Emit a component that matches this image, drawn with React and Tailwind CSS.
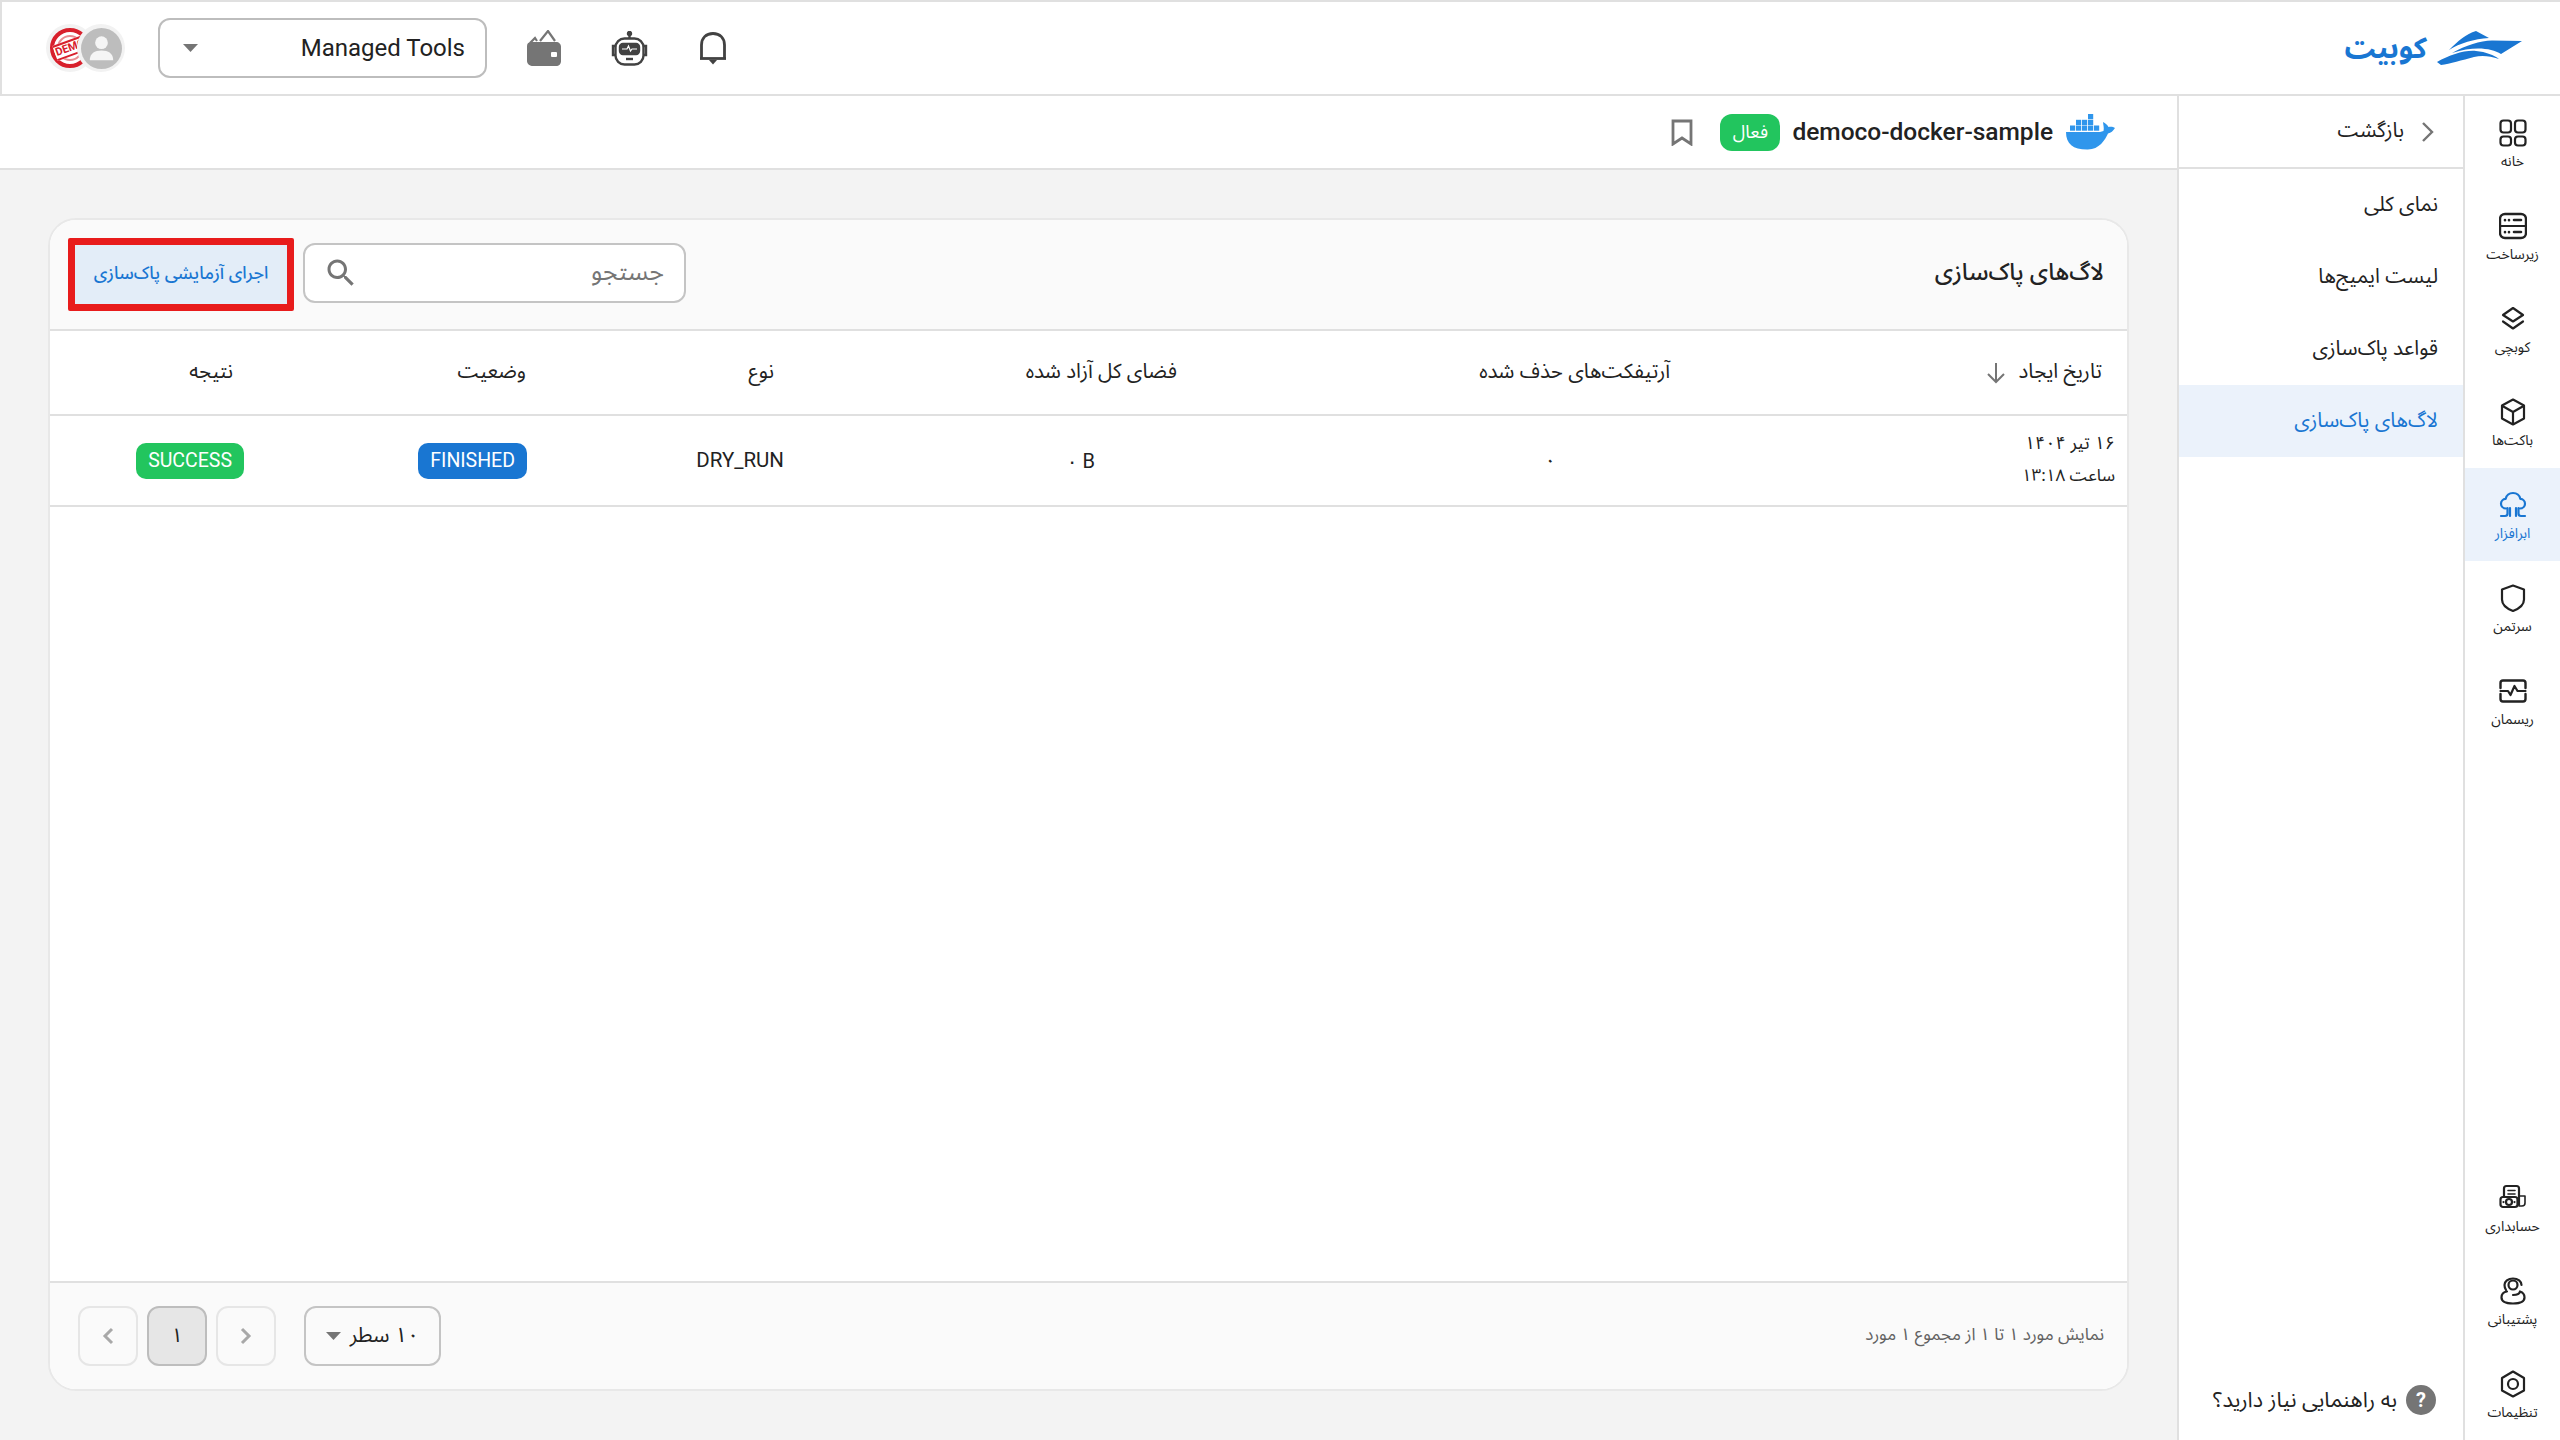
import React from 'react';

const fa = { fontFamily: '"Noto Sans Arabic","Vazirmatn","Noto Sans","DejaVu Sans",sans-serif' };
const ro = { fontFamily: 'Roboto,"DejaVu Sans",sans-serif' };

const S = ({ children, c = 'currentColor', w = 2.2, size = 28, className = '' }) => (
  <svg width={size} height={size} viewBox="0 0 28 28" fill="none" stroke={c} strokeWidth={w} strokeLinecap="round" strokeLinejoin="round" className={className}>{children}</svg>
);

const icons = {
  home: <><rect x="1.500" y="1.500" width="10.500" height="12" rx="3" /><rect x="16" y="1.500" width="10.500" height="12" rx="3" /><rect x="1.500" y="17.500" width="10.500" height="9" rx="3" /><rect x="16" y="17.500" width="10.500" height="9" rx="3" /></>,
  infra: <><rect x="1" y="2" width="26" height="24" rx="5" strokeWidth="2.400" /><path d="M1 14h26" /><path d="M6 8v.2M10 8v.2M6 20v.2M10 20v.2M15 8h7M15 20h7" strokeWidth="2.600" /></>,
  layers: <><path d="M14 3 24 10 14 16.500 4 10z" /><path d="M4 16.500 14 23.500 24 16.500" /></>,
  box: <><path d="M14 1.500 25 7.500v13L14 26.500 3 20.500v-13z" /><path d="M3.500 8 14 14l10.500-6M14 14v12" /></>,
  cloud: <><path d="M7 17.500c-3 0-5-2.200-5-4.800 0-2.600 2-4.600 4.600-4.800C7.500 4.300 10.400 2 14 2s6.500 2.300 7.400 5.900c2.600.200 4.600 2.200 4.600 4.800s-2 4.800-5 4.800" /><path d="M2 25h4c1.500 0 2.500-1 2.500-2.500V17M26 25h-4c-1.500 0-2.500-1-2.500-2.500V17M11 25v-8M17 25v-8" /></>,
  shield: <path d="M14 1.500 25 5.500v10c0 5-4.500 9-11 11.500-6.500-2.500-11-6.500-11-11.500v-10z" />,
  wave: <><path d="M1.500 11V6c0-1.500.8-2.500 2.500-2.500h20c1.700 0 2.500 1 2.500 2.500v5M1.500 17v5c0 1.500.8 2.500 2.500 2.500h20c1.700 0 2.500-1 2.500-2.500v-5" strokeWidth="2.400" /><path d="M1.500 14H9l2.500 4 4-9 3 5h8" /></>,
  account: <><path d="M5 13V4.500C5 2.800 6 2 7.500 2h10C19 2 20 3 20 4.500V21" /><path d="M20 12h6v7c0 2-1 3-3 3h-3M9 6.500h7M9 10h7" strokeWidth="1.600" /><rect x="1.500" y="13" width="17" height="10" rx="2.500" /><circle cx="10" cy="18" r="3" /><path d="M4.500 18v.1M15.500 18v.1" /></>,
  support: <><circle cx="14" cy="8" r="4.500" /><path d="M7 13c-1-1.500-1.500-3-1.500-5C5.500 4.500 9 1.500 14 1.500S22.500 4.500 22.500 8" /><path d="M8 14.500C4.500 15 2.500 17.500 2.500 20.500c0 3.500 3.500 6 11.500 6s11.500-2.500 11.500-6c0-3-1.500-5-4.500-6-.500 2.500-3 3.500-7 3.500" /></>,
  gear: <><path d="M14 1.500 25 8v12.500L14 26.500 3 20.500V8z" strokeWidth="2.200" /><circle cx="14" cy="14" r="5" strokeWidth="2.200" /></>,
};

const RailItem = ({ icon, label, active }) => (
  <div className={`h-[93px] flex flex-col items-center pt-[23px] ${active ? 'bg-[#ebf2fb] text-[#1976d2]' : 'text-[#222]'}`}>
    <S>{icons[icon]}</S>
    <span className="text-[14px] leading-[20px] mt-[5px] whitespace-nowrap" style={fa}>{label}</span>
  </div>
);

const NavItem = ({ label, active }) => (
  <div className={`h-[72px] flex items-center pr-[25px] text-[20.500px] ${active ? 'bg-[#ebf2fb] text-[#1976d2]' : 'text-[#222]'}`} style={fa}>{label}</div>
);

const Caret = ({ c = '#757575' }) => (
  <svg width="15" height="8" viewBox="0 0 15 8"><path d="M0 0h15L7.500 8z" fill={c} /></svg>
);

const Logo = () => (
  <svg width="86" height="34" viewBox="0 0 86 34" fill="#1976d2">
    <path d="M13 19C22 10 30 3 40 0l13 7C38 8 24 12 13 19z" />
    <path d="M16 22C30 14 44 10 56 9.500L86 10 65 23C55 17 38 15 16 22z" />
    <path d="M1 31C14 24 28 19 40 20c10 1 18 4 23 8-9-3-17-4-25-2C26 29 14 33 5 34z" />
  </svg>
);

const Docker = () => (
  <svg width="51" height="36" viewBox="0 0 51 36" fill="#2f96ec">
    <path d="M1 18h34l3.500-1c.8-3-.3-6-.5-9 2.500 1 4.500 3 5.500 5 2-.5 4.500-.5 6.500 1-2 3-4 5-7 5.500C40 26 34 36 22 35.500 8 35.500 1 30 1 18z" />
    <rect x="23" y="0" width="5.200" height="5.200" />
    <rect x="11" y="5.800" width="5.200" height="5.200" />
    <rect x="17" y="5.800" width="5.200" height="5.200" />
    <rect x="23" y="5.800" width="5.200" height="5.200" />
    <rect x="5" y="11.500" width="5.200" height="5.200" />
    <rect x="11" y="11.500" width="5.200" height="5.200" />
    <rect x="17" y="11.500" width="5.200" height="5.200" />
    <rect x="23" y="11.500" width="5.200" height="5.200" />
    <rect x="29" y="11.500" width="5.200" height="5.200" />
  </svg>
);

const Wallet = () => (
  <svg width="34" height="36" viewBox="0 0 34 36">
    <path d="M3 13 8 8l2 3M13 11 21 1l7 10" fill="none" stroke="#757575" strokeWidth="2.200" />
    <path d="M0 16c0-3 2-4 4-4h25c3 0 5 2 5 5v14c0 3-2 5-5 5H6c-3 0-6-2-6-5z" fill="#757575" />
    <rect x="24" y="22" width="6" height="5" rx="1" fill="#fff" />
  </svg>
);

const Robot = () => (
  <svg width="37" height="35" viewBox="0 0 37 35" fill="none" stroke="#424242" strokeWidth="2.400">
    <path d="M18.500 7V3" /><circle cx="18.500" cy="2.500" r="1.500" fill="#424242" />
    <rect x="4.500" y="7.500" width="28" height="26" rx="9" />
    <path d="M4 15H2v9h2M33 15h2v9h-2" />
    <rect x="9" y="13" width="19" height="10" rx="3" fill="#424242" />
    <path d="M11 18h5l1.500-3 2 5 1.500-2h5" stroke="#fff" strokeWidth="1.200" />
    <path d="M15 28h7" />
  </svg>
);

const Bell = () => (
  <svg width="28" height="33" viewBox="0 0 28 33" fill="none" stroke="#424242" strokeWidth="2.800">
    <path d="M2.500 26V13C2.500 6 7 1.500 14 1.500S25.500 6 25.500 13v13" />
    <path d="M1 26.500h26" />
    <path d="M10 28h8L14 32.500z" fill="#424242" stroke="none" />
  </svg>
);

const Avatars = () => (
  <div className="relative w-[80px] h-[48px]" dir="ltr">
    <div className="absolute left-0 top-0 w-[48px] h-[48px] rounded-full bg-[#f2f2f2] flex items-center justify-center overflow-hidden">
      <div className="relative w-[40px] h-[40px] rounded-full border-[4px] border-[#d8202c] bg-white flex items-center justify-center">
        <div className="absolute inset-[3px] rounded-full border-2 border-[#e98d92]" />
        <span className="relative bg-white border-y-2 border-[#d8202c] px-[1px] text-[#d8202c] text-[11px] leading-[12px] font-bold -rotate-[20deg]" style={ro}>DEMO</span>
      </div>
    </div>
    <div className="absolute left-[31px] top-0 w-[48px] h-[48px] rounded-full bg-[#f2f2f2] flex items-center justify-center">
      <svg width="41" height="41" viewBox="0 0 42 42"><circle cx="21" cy="21" r="21" fill="#bdbdbd" /><circle cx="21" cy="15" r="6.500" fill="#f5f5f5" /><path d="M9 33c0-7 5-10 12-10s12 3 12 10z" fill="#f5f5f5" /></svg>
    </div>
  </div>
);

const Th = ({ children }) => (
  <div className="flex items-center pr-[25px] text-[#222] text-[20.500px] whitespace-nowrap" style={fa}>{children}</div>
);

const Badge = ({ children, bg }) => (
  <span className={`h-[36px] px-[12px] rounded-[10px] flex items-center text-white text-[19.500px] ${bg}`} style={ro}>{children}</span>
);

export default function App() {
  return (
    <div dir="rtl" className="w-[2560px] h-[1440px] bg-[#f3f3f3] flex flex-col overflow-hidden" style={fa}>
      <header className="h-[96px] shrink-0 bg-white border-t-2 border-b-2 border-l-2 border-[#e0e0e0] flex items-center justify-between pr-[38px] pl-[44px]">
        <div className="flex items-center gap-[9px]" dir="rtl">
          <Logo />
          <span className="text-[#1976d2] text-[29px] font-bold leading-none" style={fa}>کوبیت</span>
        </div>
        <div className="flex items-center" dir="ltr">
          <Avatars />
          <div className="ml-[32px] w-[329px] h-[60px] rounded-[12px] border-2 border-[#bdbdbd] flex items-center justify-between pl-[23px] pr-[20px]">
            <Caret />
            <span className="text-[24px] text-[#222]" style={ro}>Managed Tools</span>
          </div>
          <div className="ml-[40px]"><Wallet /></div>
          <div className="ml-[50px]"><Robot /></div>
          <div className="ml-[51px]"><Bell /></div>
        </div>
      </header>

      <div className="flex-1 flex min-h-0">
        <aside className="w-[97px] shrink-0 bg-white border-l-2 border-[#e0e0e0] flex flex-col justify-between">
          <div>
            <RailItem icon="home" label="خانه" />
            <RailItem icon="infra" label="زیرساخت" />
            <RailItem icon="layers" label="کوبچی" />
            <RailItem icon="box" label="باکت‌ها" />
            <RailItem icon="cloud" label="ابرافزار" active />
            <RailItem icon="shield" label="سرتمن" />
            <RailItem icon="wave" label="ریسمان" />
          </div>
          <div>
            <RailItem icon="account" label="حسابداری" />
            <RailItem icon="support" label="پشتیبانی" />
            <RailItem icon="gear" label="تنظیمات" />
          </div>
        </aside>

        <nav className="w-[286px] shrink-0 bg-white border-l-2 border-[#e0e0e0] flex flex-col">
          <div className="h-[73px] shrink-0 border-b-2 border-[#e0e0e0] flex items-center pr-[28px] gap-[17px] text-[#222] text-[20.500px]">
            <svg width="14" height="22" viewBox="0 0 14 22" fill="none" stroke="#757575" strokeWidth="2.400"><path d="M2 2l9 9-9 9" /></svg>
            <span>بازگشت</span>
          </div>
          <NavItem label="نمای کلی" />
          <NavItem label="لیست ایمیج‌ها" />
          <NavItem label="قواعد پاک‌سازی" />
          <NavItem label="لاگ‌های پاک‌سازی" active />
          <div className="mt-auto mb-[24px] flex items-center pr-[27px] gap-[9px] text-[#222] text-[21.500px]">
            <span className="w-[30px] h-[30px] rounded-full bg-[#757575] text-white text-[20px] font-bold flex items-center justify-center" style={ro}>?</span>
            <span>به راهنمایی نیاز دارید؟</span>
          </div>
        </nav>

        <main className="flex-1 min-w-0 flex flex-col">
          <div className="h-[74px] shrink-0 bg-white border-b-2 border-[#e0e0e0] flex items-center pr-[61px] gap-[12px]">
            <Docker />
            <span className="text-[24.500px] font-medium text-[#222]" dir="ltr" style={ro}>democo-docker-sample</span>
            <span className="w-[60px] h-[37px] rounded-[12px] bg-[#22c55e] text-white text-[18px] flex items-center justify-center">فعال</span>
            <svg className="mr-[15px]" width="22" height="27" viewBox="0 0 22 27" fill="none" stroke="#757575" strokeWidth="2.800"><path d="M2 2h18v23l-9-6-9 6z" /></svg>
          </div>

          <div className="flex-1 pt-[48px] pr-[48px] pl-[48px] pb-[49px] min-h-0">
            <section className="h-full bg-white border-2 border-[#e8e8e8] rounded-[28px] overflow-hidden flex flex-col">
              <div className="h-[111px] shrink-0 bg-[#fafafa] border-b-2 border-[#e0e0e0] flex items-center justify-between pr-[23px] pl-[18px] pb-[3px]">
                <h1 className="text-[23.500px] font-medium text-[#222]">لاگ‌های پاک‌سازی</h1>
                <div className="flex items-center gap-[9px]">
                  <div className="w-[383px] h-[60px] rounded-[12px] border-2 border-[#c4c4c4] bg-white flex items-center justify-between pr-[20px] pl-[18px]">
                    <span className="text-[25px] text-[#757575]">جستجو</span>
                    <svg width="36" height="36" viewBox="0 0 24 24" fill="#757575"><path d="M15.500 14h-.79l-.28-.27C15.410 12.590 16 11.110 16 9.500 16 5.910 13.090 3 9.500 3S3 5.910 3 9.500 5.910 16 9.500 16c1.610 0 3.090-.59 4.230-1.570l.27.28v.79l5 4.990L20.490 19l-4.990-5zm-6 0C7.010 14 5 11.990 5 9.500S7.010 5 9.500 5 14 7.010 14 9.500 11.990 14 9.500 14z" /></svg>
                  </div>
                  <button className="mt-[3px] w-[226px] h-[73px] border-[7px] border-[#e81c1c] bg-[#e3edf8] text-[#1976d2] text-[17.500px] font-medium rounded-[2px] flex items-center justify-center whitespace-nowrap">اجرای آزمایشی پاک‌سازی</button>
                </div>
              </div>

              <div className="h-[85px] shrink-0 border-b-2 border-[#e0e0e0] grid grid-cols-[432px_493px_403px_248px_293px_1fr]">
                <Th><span>تاریخ ایجاد</span>
                  <svg className="mr-[12px]" width="20" height="22" viewBox="0 0 20 22" fill="none" stroke="#757575" strokeWidth="2"><path d="M10 1v19M2 12l8 8 8-8" /></svg>
                </Th>
                <Th>آرتیفکت‌های حذف شده</Th>
                <Th>فضای کل آزاد شده</Th>
                <Th>نوع</Th>
                <Th>وضعیت</Th>
                <Th>نتیجه</Th>
              </div>

              <div className="h-[91px] shrink-0 border-b-2 border-[#e0e0e0] grid grid-cols-[432px_493px_403px_248px_293px_1fr] text-[#222]">
                <div className="flex flex-col justify-center pr-[12px] gap-[9px] text-[18px] leading-[24px] pb-[2px]">
                  <span>۱۶ تیر ۱۴۰۴</span>
                  <span className="text-[17px]">ساعت ۱۳:۱۸</span>
                </div>
                <div className="flex items-center pr-[139px] text-[20px]">۰</div>
                <div className="flex items-center pr-[107px] text-[20px]"><span dir="ltr" style={ro}>۰ B</span></div>
                <div className="flex items-center pr-[15px] text-[20.500px]" style={ro}>DRY_RUN</div>
                <div className="flex items-center pr-[24px]"><Badge bg="bg-[#1976d2]">FINISHED</Badge></div>
                <div className="flex items-center pr-[14px]"><Badge bg="bg-[#22c55e]">SUCCESS</Badge></div>
              </div>

              <div className="flex-1" />

              <footer className="h-[108px] shrink-0 bg-[#fafafa] border-t-2 border-[#e0e0e0] flex items-center justify-between pr-[23px] pl-[28px]">
                <span className="text-[17px] text-[#616161]">نمایش مورد ۱ تا ۱ از مجموع ۱ مورد</span>
                <div className="flex items-center gap-[28px]">
                  <div className="w-[137px] h-[60px] rounded-[12px] border-2 border-[#c4c4c4] flex items-center justify-between pr-[20px] pl-[20px] text-[21px] text-[#222]">
                    <span>۱۰ سطر</span>
                    <Caret />
                  </div>
                  <div className="flex items-center gap-[9px]">
                    <div className="w-[60px] h-[60px] rounded-[12px] border-2 border-[#e6e6e6] flex items-center justify-center">
                      <svg width="12" height="18" viewBox="0 0 12 18" fill="none" stroke="#a8a8a8" strokeWidth="3"><path d="M2 2l7 7-7 7" /></svg>
                    </div>
                    <div className="w-[60px] h-[60px] rounded-[12px] border-2 border-[#bdbdbd] bg-[#e6e6e6] flex items-center justify-center text-[20px] text-[#222]">۱</div>
                    <div className="w-[60px] h-[60px] rounded-[12px] border-2 border-[#e6e6e6] flex items-center justify-center">
                      <svg width="12" height="18" viewBox="0 0 12 18" fill="none" stroke="#a8a8a8" strokeWidth="3"><path d="M10 2L3 9l7 7" /></svg>
                    </div>
                  </div>
                </div>
              </footer>
            </section>
          </div>
        </main>
      </div>
    </div>
  );
}
